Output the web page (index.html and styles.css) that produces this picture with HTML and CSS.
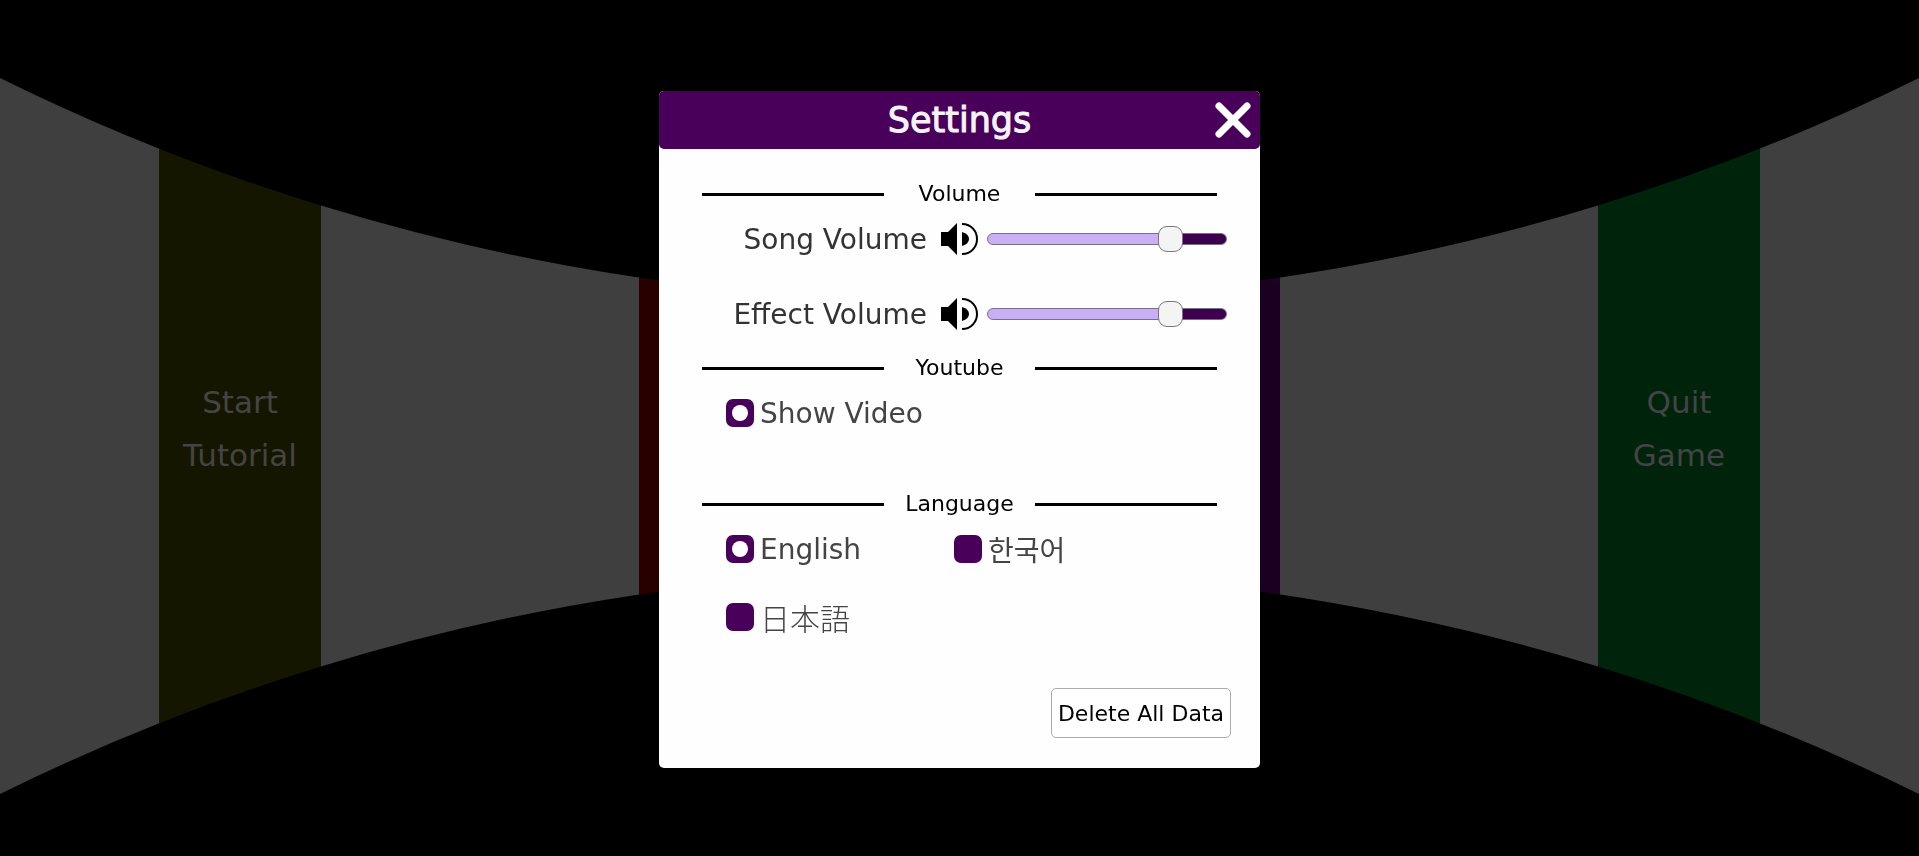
FILE: index.html
```html
<!DOCTYPE html>
<html lang="en">
<head>
    <meta charset="UTF-8">
    <meta name="viewport" content="width=device-width, initial-scale=1.0">
    <title>Settings</title>
    <link rel="stylesheet" href="styles.css">
</head>
<body>
    <main class="menu">
        <button class="menu-item tutorial">Start<br>Tutorial</button>
        <button class="menu-item play" aria-label="Play"></button>
        <button class="menu-item options" aria-label="Settings"></button>
        <button class="menu-item quit">Quit<br>Game</button>
        <!-- black curves above and below the wall -->
        <svg class="curves" viewBox="0 0 1919 856" preserveAspectRatio="none" aria-hidden="true">
            <path d="M0 0V78Q156 155 321 205.500Q632 301 959.500 301Q1287 301 1598 205.500Q1763 155 1919 78V0Z"/>
            <path d="M0 856V794Q156 717 321 666.500Q632 571 959.500 571Q1287 571 1598 666.500Q1763 717 1919 794V856Z"/>
        </svg>
    </main>

    <div class="overlay">
        <div class="dialog" role="dialog" aria-labelledby="title">
            <header class="dialog-header">
                <h1 id="title">Settings</h1>
                <button class="close-btn" aria-label="Close">
                    <svg viewBox="0 0 36 36"><path d="M4 4L32 32M32 4L4 32"/></svg>
                </button>
            </header>

            <div class="dialog-body">
                <h2 class="section-title">Volume</h2>
                <div class="volume-row">
                    <label for="songVolume">Song Volume</label>
                    <svg class="speaker" viewBox="0 0 38 32" aria-hidden="true">
                        <path d="M0 9H7L16 0V32L7 23H0Z"/>
                        <path d="M21 9Q28 11 28 16Q28 21 21 23Z"/>
                        <path class="wave" d="M21 1C31 1 36 9 36 16S31 31 21 31"/>
                    </svg>
                    <input type="range" id="songVolume" class="slider" min="0" max="100" value="80" style="--value: 80%">
                </div>
                <div class="volume-row">
                    <label for="effectVolume">Effect Volume</label>
                    <svg class="speaker" viewBox="0 0 38 32" aria-hidden="true">
                        <path d="M0 9H7L16 0V32L7 23H0Z"/>
                        <path d="M21 9Q28 11 28 16Q28 21 21 23Z"/>
                        <path class="wave" d="M21 1C31 1 36 9 36 16S31 31 21 31"/>
                    </svg>
                    <input type="range" id="effectVolume" class="slider" min="0" max="100" value="80" style="--value: 80%">
                </div>

                <h2 class="section-title">Youtube</h2>
                <div class="options-grid youtube">
                    <label class="option"><input type="checkbox" checked>Show Video</label>
                </div>

                <h2 class="section-title">Language</h2>
                <div class="options-grid">
                    <label class="option"><input type="radio" name="language" checked>English</label>
                    <label class="option" lang="ko"><input type="radio" name="language">한국어</label>
                    <label class="option" lang="ja"><input type="radio" name="language">日本語</label>
                </div>

                <div class="actions">
                    <button class="delete-btn">Delete All Data</button>
                </div>
            </div>
        </div>
    </div>

    <script>
        document.querySelectorAll('.slider').forEach(slider => {
            slider.addEventListener('input', () => {
                slider.style.setProperty('--value', slider.value + '%');
            });
        });
    </script>
</body>
</html>
```
FILE: styles.css
```css
* {
    box-sizing: border-box;
}

body {
    margin: 0;
    background-color: #000;
    font-family: "DejaVu Sans", "Noto Sans CJK KR", sans-serif;
}

button {
    font-family: inherit;
    cursor: pointer;
}

/* Main menu wall */
.menu {
    position: relative;
    display: grid;
    grid-template-columns: 159fr 162fr 318fr 162fr 317fr 162fr 318fr 162fr 159fr;
    height: 100vh;
    background-color: #3f3f3f;
}

.menu-item {
    border: none;
    padding: 2px 0 0;
    color: #444;
    font-size: 31px;
    line-height: 53px;
    grid-row: 1;
}

.tutorial {
    grid-column: 2;
    background-color: #141600;
}

.play {
    grid-column: 4;
    background-color: #280000;
}

.options {
    grid-column: 6;
    background-color: #1c0022;
}

.quit {
    grid-column: 8;
    background-color: #00230b;
}

.curves {
    position: absolute;
    top: 0;
    left: 0;
    width: 100%;
    height: 100%;
    pointer-events: none;
}

/* Settings dialog */
.overlay {
    position: fixed;
    inset: 0;
    display: flex;
    justify-content: center;
    align-items: center;
    padding-top: 3px;
}

.dialog {
    width: 90%;
    max-width: 601px;
    background-color: #fefefe;
    border-radius: 5px;
}

.dialog-header {
    display: grid;
    grid-template-columns: 1fr auto 1fr;
    align-items: center;
    height: 58px;
    padding: 0 9px;
    background-color: #48005b;
    border-radius: 5px;
}

.dialog-header h1 {
    grid-column: 2;
    margin: 0;
    color: #f4f4f4;
    font-size: 35px;
    font-weight: normal;
    line-height: 56px;
    -webkit-text-stroke: 1px #f4f4f4;
}

.close-btn {
    justify-self: end;
    width: 36px;
    height: 36px;
    padding: 0;
    border: none;
    background: none;
}

.close-btn svg {
    display: block;
    fill: none;
    stroke: #fff;
    stroke-width: 7;
    stroke-linecap: round;
}

.dialog-body {
    padding: 30px 0;
}

.section-title {
    display: grid;
    grid-template-columns: 182px 1fr 182px;
    align-items: center;
    margin: 0 43px;
    font-size: 22px;
    font-weight: normal;
    line-height: 30px;
    text-align: center;
}

.section-title::before,
.section-title::after {
    content: "";
    height: 3px;
    background-color: #000;
}

.volume-row {
    display: grid;
    grid-template-columns: 1fr 38px 240px;
    align-items: center;
    gap: 8px;
    height: 60px;
    margin-bottom: 15px;
    padding-right: 33px;
}

.volume-row + .section-title {
    margin-top: -6px;
}

.volume-row label {
    padding-right: 6px;
    color: #333;
    font-size: 28px;
    text-align: right;
}

.speaker {
    width: 38px;
    height: 32px;
}

.speaker .wave {
    fill: none;
    stroke: #000;
    stroke-width: 2;
}

.slider {
    -webkit-appearance: none;
    appearance: none;
    width: 100%;
    height: 26px;
    margin: 0;
    background: none;
    cursor: pointer;
}

.slider::-webkit-slider-runnable-track {
    height: 12px;
    border: 1px solid #77708a;
    border-radius: 6px;
    background: linear-gradient(to right, #c9b0f5 var(--value), #3c004c var(--value)) border-box;
}

.slider::-webkit-slider-thumb {
    -webkit-appearance: none;
    width: 25px;
    height: 26px;
    margin-top: -8px;
    border: 1px solid #777;
    border-radius: 9px;
    background-color: #f4f4f4;
}

.options-grid {
    display: grid;
    grid-template-columns: 228px 1fr;
    row-gap: 8px;
    padding-left: 67px;
}

.youtube {
    margin-bottom: 46px;
}

.option {
    display: flex;
    align-items: center;
    gap: 6px;
    height: 60px;
    color: #444;
    font-size: 28px;
    cursor: pointer;
}

.option:lang(ko) {
    font-family: "Noto Sans CJK KR", sans-serif;
}

.option:lang(ja) {
    font-family: "Noto Sans CJK JP", sans-serif;
    font-size: 30px;
    font-weight: 300;
}

.option input {
    -webkit-appearance: none;
    appearance: none;
    display: grid;
    place-items: center;
    width: 28px;
    height: 28px;
    margin: 0;
    border-radius: 7px;
    background-color: #48005b;
}

.option input:checked::before {
    content: "";
    width: 16px;
    height: 16px;
    border-radius: 50%;
    background-color: #fff;
}

.actions {
    display: flex;
    justify-content: flex-end;
    margin-top: 41px;
    padding-right: 29px;
}

.delete-btn {
    height: 50px;
    padding: 0 6px;
    border: 1px solid #aaa;
    border-radius: 5px;
    background-color: #fff;
    color: #000;
    font-size: 22px;
}
```
